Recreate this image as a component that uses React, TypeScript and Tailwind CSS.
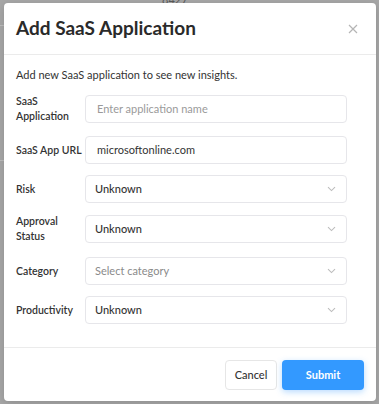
import React from "react";

const font = { fontFamily: "Lato, 'Noto Sans', sans-serif" };

function Chevron() {
  return (
    <svg width="9" height="6" viewBox="0 0 9 6" className="absolute right-[10px] top-1/2 -translate-y-1/2">
      <path d="M1 1.2 L4.5 4.6 L8 1.2" fill="none" stroke="#bdbdbd" strokeWidth="1.1" />
    </svg>
  );
}

function Row({
  label,
  children,
  className = "",
}: {
  label: React.ReactNode;
  children: React.ReactNode;
  className?: string;
}) {
  return (
    <div className={"flex items-center h-[28px] " + className}>
      <div className="w-[69px] shrink-0 text-[10.5px] leading-[15px] font-semibold text-[#333]">{label}</div>
      <div className="flex-1">{children}</div>
    </div>
  );
}

function Input({ value, placeholder }: { value?: string; placeholder?: string }) {
  return (
    <div className="h-[28px] rounded-[4px] border border-[#e6e6ea] flex items-center pl-[11px] text-[11px]">
      {value ? <span className="text-[#333]">{value}</span> : <span className="text-[#9a9a9a]">{placeholder}</span>}
    </div>
  );
}

function Select({ value, placeholder }: { value?: string; placeholder?: string }) {
  return (
    <div className="relative h-[28px] rounded-[4px] border border-[#e6e6ea] flex items-center pl-[9px] text-[11px]">
      {value ? <span className="text-[#333] font-medium">{value}</span> : <span className="text-[#8a8a8a]">{placeholder}</span>}
      <Chevron />
    </div>
  );
}

export default function App() {
  return (
    <div className="relative w-[379px] h-[404px] bg-[#a7a7a7] overflow-hidden" style={font}>
      <div className="absolute left-[162px] -top-[6px] text-[11px] leading-[12px] text-[#5a5a5a]">8427</div>
      <div className="absolute left-0 top-[25px] w-[4px] h-px bg-[#bdbdbd]" />
      <div className="absolute left-0 top-[160px] w-[4px] h-px bg-[#bdbdbd]" />
      <div className="absolute left-[4px] top-[3px] w-[372px] h-[398px] bg-white rounded-[4px] shadow-[0_2px_8px_rgba(0,0,0,0.15)] flex flex-col">
        <div className="h-[52px] shrink-0 flex items-center justify-between pl-[12px] pr-[18px] border-b border-[#ebebeb]">
          <div className="text-[19px] font-bold text-[#2a2a2a]">Add SaaS Application</div>
          <svg width="10" height="10" viewBox="0 0 10 10">
            <path d="M1 1 L9 9 M9 1 L1 9" stroke="#b5b5b5" strokeWidth="1.2" />
          </svg>
        </div>
        <div className="flex-1 pl-[12px] pr-[29px] pt-[12px]">
          <div className="text-[11px] leading-[16px] text-[#333] mb-[12px]">
            Add new SaaS application to see new insights.
          </div>
          <Row label={<>SaaS<br />Application</>}>
            <Input placeholder="Enter application name" />
          </Row>
          <Row label="SaaS App URL" className="mt-[13px]">
            <Input value="microsoftonline.com" />
          </Row>
          <Row label="Risk" className="mt-[11px]">
            <Select value="Unknown" />
          </Row>
          <Row label={<>Approval<br />Status</>} className="mt-[12px]">
            <Select value="Unknown" />
          </Row>
          <Row label="Category" className="mt-[14px]">
            <Select placeholder="Select category" />
          </Row>
          <Row label="Productivity" className="mt-[11px]">
            <Select value="Unknown" />
          </Row>
        </div>
        <div className="h-[54px] shrink-0 border-t border-[#ebebeb] flex items-start justify-end gap-[5px] pt-[12px] pr-[12px]">
          <div className="w-[52px] h-[30px] rounded-[4px] border border-[#e6e6e6] flex items-center justify-center text-[11px] text-[#333] font-medium">
            Cancel
          </div>
          <div className="w-[82px] h-[30px] rounded-[4px] bg-[#3399ff] shadow-[0_2px_6px_rgba(51,153,255,0.35)] flex items-center justify-center text-[11px] text-white font-bold">
            Submit
          </div>
        </div>
      </div>
    </div>
  );
}
